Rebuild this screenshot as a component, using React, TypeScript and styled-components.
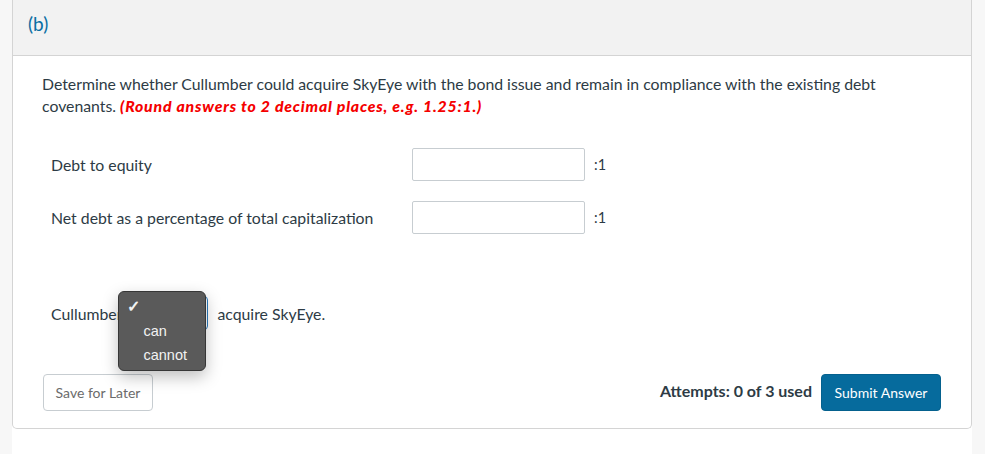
import styled, { createGlobalStyle } from 'styled-components';

const GlobalStyle = createGlobalStyle`
  html, body {
    margin: 0;
    padding: 0;
    background: #f7f7f7;
    font-family: Lato, "Liberation Sans", sans-serif;
    color: #2d3b45;
  }
`;

export default function App() {
  return (
    <>
      <GlobalStyle />
      <Column>
        <Card>
          <Header>
            <PartLabel>(b)</PartLabel>
          </Header>
          <Body>
            <Prompt>
              Determine whether Cullumber could acquire SkyEye with the bond issue and remain in
              compliance with the existing debt covenants.{' '}
              <Hint>(Round answers to 2 decimal places, e.g. 1.25:1.)</Hint>
            </Prompt>
            <Rows>
              <Row>
                <RowLabel>Debt to equity</RowLabel>
                <AnswerInput type="text" />
                <Suffix>:1</Suffix>
              </Row>
              <Row>
                <RowLabel>Net debt as a percentage of total capitalization</RowLabel>
                <AnswerInput type="text" />
                <Suffix>:1</Suffix>
              </Row>
            </Rows>
            <Sentence>
              Cullumber
              <SelectBox>
                <Popup>
                  <Option $checked>✓</Option>
                  <Option>can</Option>
                  <Option>cannot</Option>
                </Popup>
              </SelectBox>
              acquire SkyEye.
            </Sentence>
            <Footer>
              <SaveButton>Save for Later</SaveButton>
              <Actions>
                <Attempts>Attempts: 0 of 3 used</Attempts>
                <SubmitButton>Submit Answer</SubmitButton>
              </Actions>
            </Footer>
          </Body>
        </Card>
      </Column>
    </>
  );
}

const Column = styled.div`
  margin: 0 13px 0 12px;
  min-height: 454px;
  background: #fff;
`;

const Card = styled.div`
  border: 1px solid #d4d4d4;
  border-top: none;
  border-radius: 0 0 5px 5px;
`;

const Header = styled.div`
  height: 56px;
  background: #f2f2f2;
  border-bottom: 1px solid #d4d4d4;
  padding: 0 15px;
  display: flex;
  align-items: center;
  box-sizing: border-box;
`;

const PartLabel = styled.span`
  font-size: 19px;
  color: #0b6fa4;
  margin-top: -8px;
`;

const Body = styled.div`
  padding: 17px 30px 17px 30px;
`;

const Prompt = styled.p`
  margin: 0 0 0 -1px;
  font-size: 15.8px;
  line-height: 22px;
  max-width: 880px;
`;

const Hint = styled.span`
  color: #f50000;
  font-weight: 900;
  font-style: italic;
  letter-spacing: 0.8px;
`;

const Rows = styled.div`
  display: flex;
  flex-direction: column;
  gap: 20px;
  margin-top: 31px;
  padding-left: 8px;
`;

const Row = styled.div`
  display: flex;
  align-items: center;
`;

const RowLabel = styled.span`
  width: 361px;
  font-size: 15.8px;
`;

const AnswerInput = styled.input`
  width: 173px;
  height: 33px;
  box-sizing: border-box;
  border: 1px solid #c7cdd1;
  border-radius: 2px;
  background: #fff;
  outline: none;
`;

const Suffix = styled.span`
  margin-left: 9px;
  font-size: 14.5px;
`;

const Sentence = styled.div`
  display: flex;
  align-items: center;
  margin-top: 62px;
  padding-left: 8px;
  font-size: 15.8px;
`;

const SelectBox = styled.div`
  position: relative;
  width: 85px;
  height: 34px;
  box-sizing: border-box;
  margin: 0 9px 0 1px;
  border: 1px solid #2b7abc;
  border-radius: 4px;
  background: #fff;
`;

const Popup = styled.div`
  position: absolute;
  left: -6px;
  top: -6px;
  width: 88px;
  height: 80px;
  box-sizing: border-box;
  padding-top: 3px;
  background: #5a5a5a;
  border: 1px solid #363636;
  border-radius: 6px;
  box-shadow: 0 6px 16px rgba(0, 0, 0, 0.25);
  font-family: "Liberation Sans", Arial, sans-serif;
`;

const Option = styled.div<{ $checked?: boolean }>`
  height: 24px;
  line-height: 24px;
  font-size: ${({ $checked }) => ($checked ? '16px' : '14.5px')};
  font-weight: ${({ $checked }) => ($checked ? 700 : 400)};
  color: #f2f2f2;
  padding-left: ${({ $checked }) => ($checked ? '8px' : '24px')};
`;

const Footer = styled.div`
  display: flex;
  justify-content: space-between;
  align-items: center;
  margin-top: 44px;
`;

const SaveButton = styled.button`
  width: 110px;
  height: 37px;
  background: #fff;
  border: 1px solid #c7cdd1;
  border-radius: 4px;
  color: #6b6b6b;
  font-family: Lato, "Liberation Sans", sans-serif;
  font-size: 14px;
  padding: 0;
`;

const Actions = styled.div`
  display: flex;
  align-items: center;
  gap: 9px;
`;

const Attempts = styled.span`
  font-size: 16px;
  font-weight: 700;
  margin-top: -4px;
`;

const SubmitButton = styled.button`
  width: 120px;
  height: 37px;
  background: #066b9d;
  border: 1px solid #05618e;
  border-radius: 4px;
  color: #fff;
  font-family: Lato, "Liberation Sans", sans-serif;
  font-size: 14px;
  padding: 0;
`;
